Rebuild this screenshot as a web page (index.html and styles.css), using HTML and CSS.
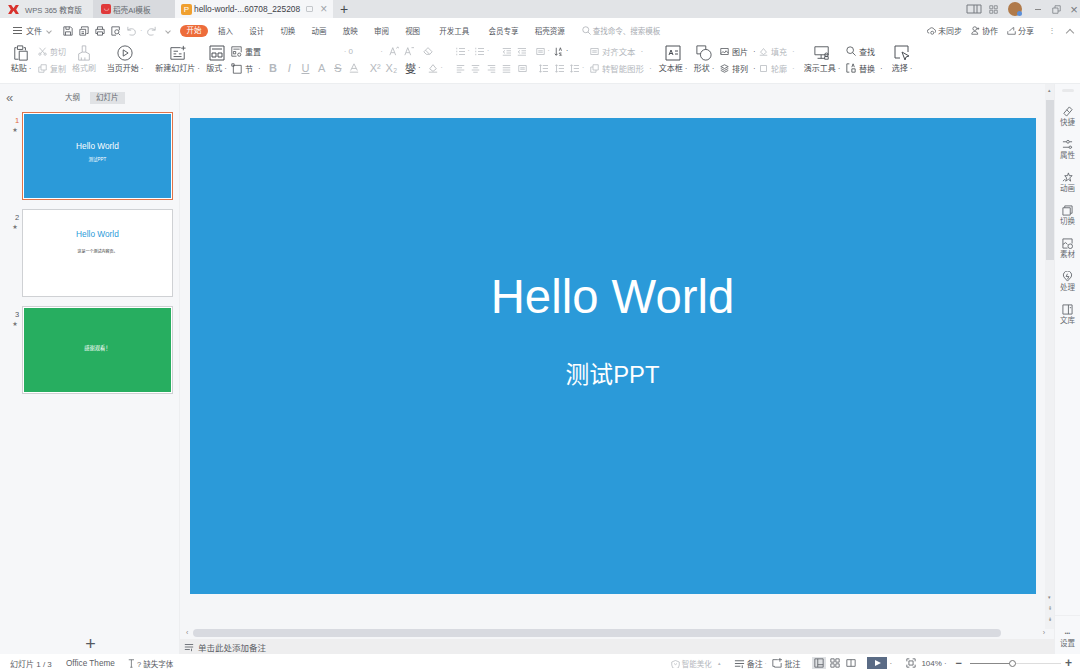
FILE: index.html
```html
<!DOCTYPE html>
<html>
<head>
  <title>hello-world - WPS</title>
  <link rel="stylesheet" href="styles.css">
</head>
<body>
  <svg class="defs" width="0" height="0">
    <defs>
      <symbol id="i-paste" viewBox="0 0 16 18"><path d="M3 3H1v13h4M11 3h2v3M4 1h6v4H4zM6 7h9v10H6z"/></symbol>
      <symbol id="i-cut" viewBox="0 0 12 12"><circle cx="2.500" cy="9.500" r="1.500"/><circle cx="9.500" cy="9.500" r="1.500"/><path d="M3.500 8.500 10 1M8.500 8.500 2 1"/></symbol>
      <symbol id="i-copy" viewBox="0 0 12 12"><path d="M4 1h7v7H4zM4 4H1v7h7V8"/></symbol>
      <symbol id="i-brush" viewBox="0 0 16 18"><path d="M6 1h4v7H6zM6 8 2 10v7h12v-7l-4-2M5 17v-3M9 17v-3"/></symbol>
      <symbol id="i-play" viewBox="0 0 18 18"><circle cx="9" cy="9" r="8"/><path d="M7 5.500 12.500 9 7 12.500z"/></symbol>
      <symbol id="i-newslide" viewBox="0 0 18 16"><path d="M12 2H1v13h15V7M15 0v5M12.500 2.500h5M4 6h5M4 9h3M4 12h9M10 9h3"/></symbol>
      <symbol id="i-layout" viewBox="0 0 16 16"><path d="M1 1h14v14H1zM3 4h10M3 8h4v4H3zM9 8h4v4H9z"/></symbol>
      <symbol id="i-reset" viewBox="0 0 14 14"><path d="M1 1h12v7M1 1v12h6M3 4h8M3 7h3v3H3z"/><circle cx="10.500" cy="11" r="2"/></symbol>
      <symbol id="i-section" viewBox="0 0 14 14"><path d="M3 3h10v10H3zM1 1h3v3H1z"/></symbol>
      <symbol id="i-grow" viewBox="0 0 12 12"><path d="M1 11 4.500 2 8 11M2.500 8h4M9 3l1.500-2L12 3"/></symbol>
      <symbol id="i-shrink" viewBox="0 0 12 12"><path d="M1 11 4.500 2 8 11M2.500 8h4M9 2h3"/></symbol>
      <symbol id="i-eraser" viewBox="0 0 12 12"><path d="M1 7l5-5 5 5-3 3H4zM3 5l5 5"/></symbol>
      <symbol id="i-a" viewBox="0 0 12 12"><path d="M2 9 6 1l4 8M3.500 6.500h5M1 11h10"/></symbol>
      <symbol id="i-list" viewBox="0 0 12 12"><path d="M4 2h8M4 6h8M4 10h8M1 1v2M1 5v2M1 9v2"/></symbol>
      <symbol id="i-indent" viewBox="0 0 12 12"><path d="M1 2h11M6 5h6M6 8h6M1 11h11M4 4.500 1.500 6.500 4 8.500"/></symbol>
      <symbol id="i-align" viewBox="0 0 12 12"><path d="M1 2h10M1 5h7M1 8h10M1 11h6"/></symbol>
      <symbol id="i-center" viewBox="0 0 12 12"><path d="M1 2h10M3 5h6M1 8h10M3 11h6"/></symbol>
      <symbol id="i-right" viewBox="0 0 12 12"><path d="M1 2h10M4 5h7M1 8h10M5 11h6"/></symbol>
      <symbol id="i-just" viewBox="0 0 12 12"><path d="M1 2h10M1 5h10M1 8h10M1 11h10"/></symbol>
      <symbol id="i-box" viewBox="0 0 12 12"><path d="M1 2h10v8H1zM3 5h6M3 7h6"/></symbol>
      <symbol id="i-sort" viewBox="0 0 12 12"><path d="M3 1v10M1 9l2 2 2-2M7 5l1.500-4L10 5M7 11h3l-3-3h3"/></symbol>
      <symbol id="i-spacing" viewBox="0 0 12 12"><path d="M2 1v10M.5 2.500 2 1l1.500 1.500M.5 9.500 2 11l1.500-1.500M5 2h7M5 6h7M5 10h7"/></symbol>
      <symbol id="i-textbox" viewBox="0 0 16 16"><path d="M1 1h14v14H1zM4 10l2-5 2 5M4.700 8.500h2.600M10 6h3M10 9h3"/></symbol>
      <symbol id="i-shape" viewBox="0 0 18 18"><path d="M1 1h10v9H1z"/><circle cx="11" cy="11" r="6" fill="#fff"/></symbol>
      <symbol id="i-picture" viewBox="0 0 12 12"><path d="M1 2h10v8H1zM1 9l3-3 2 2 2-3 3 3"/></symbol>
      <symbol id="i-fill" viewBox="0 0 12 12"><path d="M2 7l4-5 4 5-4 3zM1 11h10"/></symbol>
      <symbol id="i-stack" viewBox="0 0 12 12"><path d="M6 1l5 2.500L6 6 1 3.500zM1 6l5 2.500L11 6M1 8.500 6 11l5-2.500"/></symbol>
      <symbol id="i-square" viewBox="0 0 12 12"><path d="M2 2h8v8H2z"/></symbol>
      <symbol id="i-present" viewBox="0 0 18 16"><path d="M1 1h15v9H1zM8 10v4M4 14h8"/><circle cx="14" cy="10" r="2"/><path d="M12 15h4v-3h-4z"/></symbol>
      <symbol id="i-search" viewBox="0 0 12 12"><circle cx="5" cy="5" r="4"/><path d="M8 8l3.500 3.500"/></symbol>
      <symbol id="i-replace" viewBox="0 0 12 12"><path d="M4 1H1v10h3M7 5l1.500-4L10 5M7 7h4v4H7z"/></symbol>
      <symbol id="i-select" viewBox="0 0 16 16"><path d="M6 13H1V1h13v6M8 7l7 4-3 1-1 3z"/></symbol>
      <symbol id="i-cloud" viewBox="0 0 12 12"><path d="M3 9.500a2.500 2.500 0 0 1 0-5 3.500 3.500 0 0 1 6.500 0 2.500 2.500 0 0 1 1 4.500"/><circle cx="7" cy="9" r="2"/></symbol>
      <symbol id="i-people" viewBox="0 0 12 12"><circle cx="5" cy="3.500" r="2.500"/><path d="M1 11c0-5 8-5 8 0zM9.500 2v3M8 3.500h3"/></symbol>
      <symbol id="i-share" viewBox="0 0 12 12"><path d="M1 7v4h10V7M3 7l4-4 2-1v4"/></symbol>
      <symbol id="i-save" viewBox="0 0 12 12"><path d="M1 1h8l2 2v8H1zM3.500 1v3h4V1M3 11V7h6v4"/></symbol>
      <symbol id="i-export" viewBox="0 0 12 12"><path d="M3 3V1h8v8H9M1 4h7v7H1zM3 7h3M3 9h3"/></symbol>
      <symbol id="i-print" viewBox="0 0 12 12"><path d="M3 4V1h6v3M3 9H1V4h10v5H9M3 7h6v4H3z"/></symbol>
      <symbol id="i-preview" viewBox="0 0 12 12"><path d="M6 11H1V1h9v4"/><circle cx="7" cy="7" r="2.500"/><path d="M9 9l2 2"/></symbol>
      <symbol id="i-undo" viewBox="0 0 12 12"><path d="M1 1v4h4M1 5c3-3 9-2 9 2.500S5 11 3 10.500"/></symbol>
      <symbol id="i-redo" viewBox="0 0 12 12"><path d="M11 1v4H7M11 5C8 2 2 3 2 7.500S7 11 9 10.500"/></symbol>
      <symbol id="i-quick" viewBox="0 0 12 12"><path d="M2 8 8 1l3 3-6 7zM5 4l3 3"/></symbol>
      <symbol id="i-prop" viewBox="0 0 12 12"><path d="M1 3h4M8 3h3M1 9h7M10 9h1"/><circle cx="6.500" cy="3" r="1.500"/><circle cx="9" cy="9" r="1.300"/></symbol>
      <symbol id="i-star" viewBox="0 0 12 12"><path d="M7 1l1 3h3L8.500 6.500l1 3.500L7 8l-3 2 1-3.500L3 4h3zM1 10l2-2"/></symbol>
      <symbol id="i-trans" viewBox="0 0 12 12"><path d="M3 3V1h8v8H9M1 3h8v8H1z"/></symbol>
      <symbol id="i-material" viewBox="0 0 12 12"><path d="M6 11H1V1h10v5M1 7l3-2 2 2"/><circle cx="9" cy="9" r="2.500"/></symbol>
      <symbol id="i-process" viewBox="0 0 12 12"><path d="M6 11 2 6.500a4.500 4.500 0 1 1 8 0z"/><path d="M6 3 4.500 6h3L6 9"/></symbol>
      <symbol id="i-library" viewBox="0 0 12 12"><path d="M1 1h10v10H1zM7 1v10M8.500 4h1.500"/></symbol>
      <symbol id="i-notes" viewBox="0 0 12 12"><path d="M1 3h10M1 6h10M1 9h6M9 8v3"/></symbol>
      <symbol id="i-font" viewBox="0 0 12 12"><path d="M1 1h7M4.500 1v10M3 11h3"/></symbol>
      <symbol id="i-beauty" viewBox="0 0 12 12"><path d="M1 4l5-2 5 2v4a5 5 0 0 1-10 0zM4 6l2 1.500L8 6"/></symbol>
      <symbol id="i-comment" viewBox="0 0 12 12"><path d="M7 2H1v8h2v1h8V6M9.500 0v4.500M7.500 2H12"/></symbol>
      <symbol id="i-normal" viewBox="0 0 12 12"><path d="M1 1h10v10H1zM4.500 1v10M4.500 8H11"/></symbol>
      <symbol id="i-grid" viewBox="0 0 12 12"><path d="M1 1h4v4H1zM7 1h4v4H7zM1 7h4v4H1zM7 7h4v4H7z"/></symbol>
      <symbol id="i-book" viewBox="0 0 12 12"><path d="M1 2h10v8H1zM6 2v8"/></symbol>
      <symbol id="i-fit" viewBox="0 0 12 12"><path d="M1 4V1h3M8 1h3v3M11 8v3H8M4 11H1V8M3.500 3.500h5v5h-5z"/></symbol>
      <symbol id="i-restore" viewBox="0 0 12 12"><path d="M1 4h7v7H1zM4 4V1h7v7H8"/></symbol>
      <symbol id="i-panel" viewBox="0 0 16 10"><path d="M1 1h14v8H1zM8 1v8M11 1v8"/></symbol>
    </defs>
  </svg>

  <div class="tabbar">
    <div class="tab tab-home">
      <svg class="logo-k" viewBox="0 0 12 10"><path d="M0 0h3.500L6 3.500 8.500 0H12L9 5l3 5H8.500L6 6.500 3.500 10H0l3-5z"/></svg>
      <span>WPS 365 教育版</span>
    </div>
    <div class="tab tab-ai">
      <span class="logo-ai">◡</span>
      <span>稻壳AI模板</span>
    </div>
    <div class="tab tab-file">
      <span class="logo-p">P</span>
      <span class="tab-name">hello-world-...60708_225208</span>
      <span class="tab-bubble"></span>
      <span class="tab-x">×</span>
    </div>
    <div class="tab-add">+</div>
    <div class="tabbar-right">
      <svg class="ic ic-panel"><use href="#i-panel"/></svg>
      <svg class="ic ic-9 tb-grid"><use href="#i-grid"/></svg>
      <span class="avatar"></span>
      <span class="win-min"></span>
      <svg class="ic ic-9"><use href="#i-restore"/></svg>
      <span class="win-x">×</span>
    </div>
  </div>

  <div class="menubar">
    <span class="hamburger"><i></i><i></i><i></i></span>
    <span class="menu-file">文件</span>
    <span class="caret-down"></span>
    <div class="quick">
      <svg class="ic ic-10"><use href="#i-save"/></svg>
      <svg class="ic ic-10"><use href="#i-export"/></svg>
      <svg class="ic ic-10"><use href="#i-print"/></svg>
      <svg class="ic ic-10"><use href="#i-preview"/></svg>
      <svg class="ic ic-10 faint"><use href="#i-undo"/></svg>
      <b class="faint">·</b>
      <svg class="ic ic-10 faint"><use href="#i-redo"/></svg>
      <span class="caret-down"></span>
    </div>
    <span class="menu-active">开始</span>
    <nav class="menu-items">
      <a>插入</a><a>设计</a><a>切换</a><a>动画</a><a>放映</a><a>审阅</a><a>视图</a>
      <a class="wide">开发工具</a><a class="wide">会员专享</a><a>稻壳资源</a>
    </nav>
    <div class="menu-search">
      <svg class="ic ic-9"><use href="#i-search"/></svg>
      <span>查找命令、搜索模板</span>
    </div>
    <div class="menu-right">
      <span class="mr-item"><svg class="ic ic-9"><use href="#i-cloud"/></svg>未同步</span>
      <span class="mr-item"><svg class="ic ic-9"><use href="#i-people"/></svg>协作</span>
      <span class="mr-item"><svg class="ic ic-9"><use href="#i-share"/></svg>分享</span>
      <span class="mr-dots">⋮</span>
      <span class="mr-up"></span>
    </div>
  </div>

  <div class="ribbon">
    <div class="big w-paste"><svg class="ic ic-big"><use href="#i-paste"/></svg><span>粘贴<b>·</b></span></div>
    <div class="stack w-clip faint">
      <span class="row"><svg class="ic ic-9"><use href="#i-cut"/></svg>剪切</span>
      <span class="row"><svg class="ic ic-9"><use href="#i-copy"/></svg>复制</span>
    </div>
    <div class="big w-painter faint"><svg class="ic ic-big"><use href="#i-brush"/></svg><span>格式刷</span></div>
    <div class="big w-start"><svg class="ic ic-big"><use href="#i-play"/></svg><span>当页开始<b>·</b></span></div>
    <div class="big w-new"><svg class="ic ic-big"><use href="#i-newslide"/></svg><span>新建幻灯片<b>·</b></span></div>
    <div class="big w-layout"><svg class="ic ic-big"><use href="#i-layout"/></svg><span>版式<b>·</b></span></div>
    <div class="stack w-reset">
      <span class="row"><svg class="ic ic-11"><use href="#i-reset"/></svg>重置</span>
      <span class="row"><svg class="ic ic-11"><use href="#i-section"/></svg>节<b>·</b></span>
    </div>

    <div class="stack w-font faint">
      <span class="row font-top">
        <span class="font-input">· 0</span>
        <span class="size-caret">·</span>
        <span class="cell"><svg class="ic ic-10"><use href="#i-grow"/></svg></span>
        <span class="cell"><svg class="ic ic-10"><use href="#i-shrink"/></svg></span>
        <span class="cell cell-gap"><svg class="ic ic-10"><use href="#i-eraser"/></svg></span>
      </span>
      <span class="row font-btm">
        <span class="cell bold">B</span>
        <span class="cell ital">I</span>
        <span class="cell under">U</span>
        <span class="cell">A</span>
        <span class="cell strike">S</span>
        <span class="cell"><svg class="ic ic-10"><use href="#i-a"/></svg></span>
        <span class="cell cell-x">X²</span>
        <span class="cell">X₂</span>
        <span class="cell cell-gap dark caret">燮</span>
        <span class="cell cell-pen caret"><svg class="ic ic-10"><use href="#i-fill"/></svg></span>
      </span>
    </div>

    <div class="stack w-para faint">
      <span class="row">
        <span class="cell caret"><svg class="ic ic-9"><use href="#i-list"/></svg></span>
        <span class="cell cell-wide caret"><svg class="ic ic-9"><use href="#i-list"/></svg></span>
        <span class="cell cell-wider"><svg class="ic ic-9"><use href="#i-indent"/></svg></span>
        <span class="cell"><svg class="ic ic-9"><use href="#i-indent"/></svg></span>
        <span class="cell cell-gap caret"><svg class="ic ic-9"><use href="#i-box"/></svg></span>
        <span class="cell cell-gap caret dark"><svg class="ic ic-9"><use href="#i-sort"/></svg></span>
      </span>
      <span class="row">
        <span class="cell"><svg class="ic ic-9"><use href="#i-align"/></svg></span>
        <span class="cell"><svg class="ic ic-9"><use href="#i-center"/></svg></span>
        <span class="cell"><svg class="ic ic-9"><use href="#i-right"/></svg></span>
        <span class="cell"><svg class="ic ic-9"><use href="#i-just"/></svg></span>
        <span class="cell"><svg class="ic ic-9"><use href="#i-box"/></svg></span>
        <span class="cell cell-sep"><svg class="ic ic-9"><use href="#i-spacing"/></svg></span>
        <span class="cell"><svg class="ic ic-9"><use href="#i-spacing"/></svg></span>
        <span class="cell caret"><svg class="ic ic-9"><use href="#i-spacing"/></svg></span>
      </span>
    </div>
    <div class="stack w-text faint">
      <span class="row"><svg class="ic ic-9"><use href="#i-box"/></svg>对齐文本<b>·</b></span>
      <span class="row"><svg class="ic ic-9"><use href="#i-copy"/></svg>转智能图形<b>·</b></span>
    </div>

    <div class="big w-textbox"><svg class="ic ic-big"><use href="#i-textbox"/></svg><span>文本框<b>·</b></span></div>
    <div class="big w-shape"><svg class="ic ic-big"><use href="#i-shape"/></svg><span>形状<b>·</b></span></div>
    <div class="stack w-pic">
      <span class="row"><svg class="ic ic-9"><use href="#i-picture"/></svg>图片<b>·</b></span>
      <span class="row"><svg class="ic ic-9"><use href="#i-stack"/></svg>排列<b>·</b></span>
    </div>
    <div class="stack w-fill faint">
      <span class="row"><svg class="ic ic-9"><use href="#i-fill"/></svg>填充<b>·</b></span>
      <span class="row"><svg class="ic ic-9"><use href="#i-square"/></svg>轮廓<b>·</b></span>
    </div>
    <div class="big w-present"><svg class="ic ic-big"><use href="#i-present"/></svg><span>演示工具<b>·</b></span></div>
    <div class="stack w-find">
      <span class="row"><svg class="ic ic-10"><use href="#i-search"/></svg>查找</span>
      <span class="row"><svg class="ic ic-10"><use href="#i-replace"/></svg>替换<b>·</b></span>
    </div>
    <div class="big w-select"><svg class="ic ic-big"><use href="#i-select"/></svg><span>选择<b>·</b></span></div>
  </div>

  <div class="workspace">
    <aside class="slides-pane">
      <div class="pane-tabs">
        <span class="collapse">«</span>
        <span class="pane-tab">大纲</span>
        <span class="pane-tab current">幻灯片</span>
      </div>
      <div class="thumb-list">
        <div class="thumb-row">
          <div class="thumb-no active-no">1<i>★</i></div>
          <div class="thumb selected"><div class="mini blue">
            <div class="mini-title">Hello World</div>
            <div class="mini-sub">测试PPT</div>
          </div></div>
        </div>
        <div class="thumb-row">
          <div class="thumb-no">2<i>★</i></div>
          <div class="thumb"><div class="mini white">
            <div class="mini-title">Hello World</div>
            <div class="mini-sub">这是一个测试内容页。</div>
          </div></div>
        </div>
        <div class="thumb-row">
          <div class="thumb-no">3<i>★</i></div>
          <div class="thumb"><div class="mini green">
            <div class="mini-thanks">感谢观看！</div>
          </div></div>
        </div>
      </div>
      <div class="add-slide">+</div>
    </aside>

    <main class="editor">
      <div class="editor-top">
        <div class="stage">
          <div class="slide">
            <div class="slide-title">Hello World</div>
            <div class="slide-sub">测试PPT</div>
          </div>
        </div>
        <div class="vscroll">
          <span class="arrow">▴</span>
          <span class="vthumb"></span>
          <span class="arrow low">▾</span>
          <span class="arrow">⇞</span>
          <span class="arrow">⇟</span>
        </div>
      </div>
      <div class="hscroll">
        <span class="arrow">‹</span>
        <span class="hthumb"></span>
        <span class="arrow">›</span>
      </div>
      <div class="notes">
        <svg class="ic ic-10"><use href="#i-notes"/></svg>
        <span>单击此处添加备注</span>
      </div>
    </main>

    <aside class="sidetools">
      <div class="side-grip"></div>
      <div class="tool"><svg class="ic ic-11"><use href="#i-quick"/></svg>快捷</div>
      <div class="tool"><svg class="ic ic-11"><use href="#i-prop"/></svg>属性</div>
      <div class="tool"><svg class="ic ic-11"><use href="#i-star"/></svg>动画</div>
      <div class="tool"><svg class="ic ic-11"><use href="#i-trans"/></svg>切换</div>
      <div class="tool"><svg class="ic ic-11"><use href="#i-material"/></svg>素材</div>
      <div class="tool"><svg class="ic ic-11"><use href="#i-process"/></svg>处理</div>
      <div class="tool"><svg class="ic ic-11"><use href="#i-library"/></svg>文库</div>
      <div class="tool settings"><span class="dots">•••</span>设置</div>
    </aside>
  </div>

  <div class="statusbar">
    <span class="st-page">幻灯片 1 / 3</span>
    <span class="st-theme">Office Theme</span>
    <span class="st-font"><svg class="ic ic-9"><use href="#i-font"/></svg>? 缺失字体</span>
    <div class="st-right">
      <span class="st-item st-beauty faint"><svg class="ic ic-9"><use href="#i-beauty"/></svg>智能美化 <b>▴</b></span>
      <span class="st-item"><svg class="ic ic-11"><use href="#i-notes"/></svg>备注<b>·</b></span>
      <span class="st-item st-comment"><svg class="ic ic-10"><use href="#i-comment"/></svg>批注</span>
      <span class="view-btn on"><svg class="ic ic-10"><use href="#i-normal"/></svg></span>
      <span class="view-btn"><svg class="ic ic-10"><use href="#i-grid"/></svg></span>
      <span class="view-btn"><svg class="ic ic-10"><use href="#i-book"/></svg></span>
      <span class="play-btn"></span>
      <b class="play-caret">·</b>
      <svg class="ic ic-10 st-fit"><use href="#i-fit"/></svg>
      <span class="st-zoom">104%<b>·</b></span>
      <span class="z-minus">−</span>
      <span class="z-track"><i></i></span>
      <span class="z-plus">+</span>
    </div>
  </div>
</body>
</html>
```

FILE: styles.css
```css
/* Global styles */
* {
  box-sizing: border-box;
}

html, body {
  height: 100%;
}

body {
  margin: 0;
  width: 1080px;
  height: 669px;
  overflow: hidden;
  display: flex;
  flex-direction: column;
  font-family: "Liberation Sans", "Noto Sans CJK SC", sans-serif;
  font-size: 8px;
  color: #50545a;
  background-color: #f5f6f8;
}

.defs {
  position: absolute;
}

/* Icons */
.ic {
  flex: none;
  fill: none;
  stroke: currentColor;
  stroke-width: 1;
}

.ic-9 { width: 9px; height: 9px; }
.ic-10 { width: 10px; height: 10px; }
.ic-11 { width: 11px; height: 11px; }
.ic-big { width: 16px; height: 16px; margin-top: 2px; }
.ic-panel { width: 16px; height: 10px; }

.faint {
  color: #b4b8bd;
}

.dark {
  color: #44484e;
}

/* Tab bar */
.tabbar {
  flex: none;
  height: 18px;
  display: flex;
  background-color: #e2e4e7;
}

.tab {
  display: flex;
  align-items: center;
  height: 18px;
  color: #666a70;
  font-size: 7.600px;
}

.tab-home {
  width: 93px;
  padding-left: 8px;
  gap: 6px;
  background-color: #e7e9eb;
}

.logo-k {
  width: 11px;
  height: 9px;
  fill: #d8322c;
}

.tab-ai {
  width: 82px;
  padding-left: 8px;
  gap: 2px;
  background-color: #d8dade;
}

.logo-ai {
  width: 10px;
  height: 10px;
  border-radius: 2px;
  background-color: #e0393a;
  color: #fff;
  font-size: 6px;
  line-height: 9px;
  text-align: center;
}

.tab-file {
  width: 158px;
  padding-left: 6px;
  background-color: #f5f6f8;
  color: #3c4046;
}

.logo-p {
  width: 11px;
  height: 11px;
  margin-right: 2px;
  border-radius: 2px;
  background-color: #f0a030;
  color: #fff;
  font-size: 8px;
  line-height: 11px;
  text-align: center;
}

.tab-name {
  font-size: 8.400px;
  white-space: nowrap;
}

.tab-bubble {
  width: 7px;
  height: 6px;
  margin-left: 6px;
  border: 1px solid #c4c7cb;
  border-radius: 1px;
}

.tab-x {
  margin-left: 7px;
  font-size: 12px;
  color: #a0a4a9;
}

.tab-add {
  width: 22px;
  text-align: center;
  font-size: 14px;
  line-height: 18px;
  color: #44484e;
}

.tabbar-right {
  margin-left: auto;
  display: flex;
  align-items: center;
  color: #777b80;
}

.tb-grid {
  margin-left: 7px;
}

.avatar {
  position: relative;
  width: 14px;
  height: 14px;
  margin-left: 10px;
  border-radius: 50%;
  background-color: #b07a4a;
}

.avatar::after {
  content: "";
  position: absolute;
  right: 0;
  bottom: 0;
  width: 5px;
  height: 5px;
  border-radius: 50%;
  background-color: #5b8fd8;
}

.win-min {
  width: 6px;
  height: 1px;
  margin-left: 13px;
  margin-right: 11px;
  background-color: #888;
}

.win-x {
  width: 12px;
  margin-left: 7px;
  font-size: 13px;
  text-align: center;
}

/* Menu row */
.menubar {
  flex: none;
  height: 25px;
  display: flex;
  align-items: center;
  padding-left: 13px;
  background-color: #fff;
  font-size: 7.500px;
  color: #55595f;
}

.hamburger {
  width: 9px;
  display: flex;
  flex-direction: column;
  gap: 2px;
  margin-right: 4px;
}

.hamburger i {
  display: block;
  height: 1px;
  background-color: #666;
}

.menu-file {
  font-size: 8px;
}

.caret-down {
  width: 4px;
  height: 4px;
  margin-left: 5px;
  border-right: 1px solid #aaa;
  border-bottom: 1px solid #aaa;
  transform: rotate(45deg);
}

.quick {
  display: flex;
  align-items: center;
  gap: 6px;
  margin-left: 12px;
  width: 117px;
  color: #55595f;
}

.quick b {
  font-weight: normal;
  width: 2px;
  margin-left: -3px;
  margin-right: -2px;
}

.quick .caret-down {
  margin-left: 4px;
}

.menu-active {
  width: 28px;
  height: 12px;
  border-radius: 6px;
  background-color: #ed6c3a;
  color: #fff;
  line-height: 12px;
  text-align: center;
}

.menu-items {
  display: flex;
  gap: 16.200px;
  margin-left: 10px;
}

.menu-items a.wide {
  margin-left: 3px;
}

.menu-search {
  display: flex;
  align-items: center;
  gap: 2px;
  margin-left: 17px;
  color: #a8acb2;
}

.menu-right {
  margin-left: auto;
  display: flex;
  align-items: center;
  gap: 9px;
  padding-right: 7px;
  font-size: 8px;
}

.mr-item {
  display: flex;
  align-items: center;
  gap: 2px;
}

.mr-dots {
  margin-left: 5px;
  margin-right: 2px;
  color: #999;
}

.mr-up {
  width: 6px;
  height: 6px;
  margin-top: 4px;
  border-left: 1px solid #999;
  border-top: 1px solid #999;
  transform: rotate(45deg);
}

/* Ribbon */
.ribbon {
  flex: none;
  height: 41px;
  display: flex;
  background-color: #fff;
  border-bottom: 1px solid #eceef0;
  font-size: 8px;
  color: #4c5056;
  white-space: nowrap;
}

.ribbon b {
  font-weight: normal;
  margin-left: 2px;
}

.big {
  display: flex;
  flex-direction: column;
  align-items: center;
  justify-content: space-between;
  height: 32px;
}

.big span {
  line-height: 12px;
}

.stack {
  display: flex;
  flex-direction: column;
  justify-content: space-between;
  height: 31px;
  padding-top: 2px;
}

.row {
  display: flex;
  align-items: center;
  gap: 3px;
  height: 12px;
}

.w-paste { width: 24px; margin-left: 9px; }
.w-clip { width: 31px; margin-left: 5px; }
.w-painter { width: 26px; margin-left: 2px; }
.w-start { width: 40px; margin-left: 8px; }
.w-new { width: 47px; margin-left: 9px; }
.w-layout { width: 25px; margin-left: 3px; }
.w-reset { width: 36px; margin-left: 2px; }
.w-font { width: 189px; margin-left: -2px; }
.w-para { width: 141.500px; margin-left: -1.500px; }
.w-text { width: 66px; margin-left: -4px; font-size: 8.400px; }
.w-textbox { width: 34px; }
.w-shape { width: 28px; }
.w-pic { width: 38px; margin-left: 2px; }
.w-fill { width: 40px; margin-left: 1px; }
.w-present { width: 36px; margin-left: 5px; }
.w-find { width: 40px; margin-left: 6px; }
.w-select { width: 28px; margin-left: 2px; }

/* Fixed width buttons in the font and paragraph groups */
.cell {
  position: relative;
  flex: none;
  display: flex;
  align-items: center;
  justify-content: center;
  width: 15.500px;
  height: 12px;
}

.cell.caret::after {
  content: "·";
  position: absolute;
  right: -2px;
  top: 1px;
  font-size: 8px;
}

.cell-gap { margin-left: 3px; }
.cell-wide { margin-left: 4px; }
.cell-wider { margin-left: 11px; }
.cell-sep { margin-left: 6px; }
.cell-x { margin-left: 5px; }
.cell-pen { margin-left: 6px; }

.w-font .row,
.w-para .row {
  gap: 0;
}

.w-font .font-top {
  padding-left: 6px;
}

.font-input {
  width: 82px;
  text-align: right;
}

.size-caret {
  width: 30px;
  margin-right: 3px;
  text-align: right;
}

.font-btm {
  font-size: 11px;
}

.font-btm .cell {
  width: 16.200px;
}

.bold { font-weight: bold; }
.ital { font-style: italic; }
.under { text-decoration: underline; }
.strike { text-decoration: line-through; }

/* Workspace */
.workspace {
  flex: 1;
  min-height: 0;
  display: flex;
}

.slides-pane {
  flex: none;
  width: 180px;
  display: flex;
  flex-direction: column;
  padding: 8px 6px 3px 6px;
  background-color: #f6f7f9;
  border-right: 1px solid #edeef0;
}

.pane-tabs {
  display: flex;
  align-items: center;
  height: 12px;
  color: #666a70;
  font-size: 7.500px;
}

.collapse {
  width: 53px;
  font-size: 13px;
  line-height: 12px;
  color: #777;
}

.pane-tab {
  padding: 0 6px;
  line-height: 12px;
}

.pane-tab.current {
  margin-left: 4px;
  background-color: #e0e2e5;
}

.thumb-list {
  display: flex;
  flex-direction: column;
  gap: 9px;
  margin-top: 8px;
}

.thumb-row {
  display: flex;
}

.thumb-no {
  width: 16px;
  padding: 5px 0 0 6px;
  font-size: 7.500px;
  line-height: 8px;
  text-align: center;
  color: #55595f;
}

.thumb-no i {
  display: block;
  margin-left: -4px;
  font-size: 5px;
  font-style: normal;
  color: #777;
}

.active-no {
  color: #e0673a;
}

.thumb {
  width: 152px;
  height: 88px;
  padding: 1px;
  border: 1.500px solid #cfd1d4;
  background-color: #fff;
}

.thumb.selected {
  border-color: #e0744a;
}

.mini {
  height: 100%;
  display: flex;
  flex-direction: column;
  align-items: center;
  padding-top: 27px;
}

.mini.blue {
  background-color: #2b9ad9;
  color: #fff;
}

.mini.white {
  padding-top: 18px;
  background-color: #fff;
  color: #2b9ad9;
}

.mini.green {
  background-color: #27ae60;
  color: #fff;
  padding-top: 36px;
}

.mini-title {
  font-size: 8.300px;
  line-height: 10px;
}

.mini-sub {
  margin-top: 6px;
  font-size: 4.500px;
  line-height: 6px;
}

.mini.white .mini-sub {
  margin-top: 10px;
  font-size: 4px;
  color: #333;
}

.mini-thanks {
  font-size: 5.300px;
  line-height: 8px;
}

.add-slide {
  margin-top: auto;
  padding-left: 2px;
  text-align: center;
  font-size: 18px;
  font-weight: 300;
  line-height: 14px;
  color: #55595f;
}

/* Editor */
.editor {
  flex: 1;
  min-width: 0;
  display: flex;
  flex-direction: column;
  background-color: #f5f6f8;
}

.editor-top {
  flex: 1;
  min-height: 0;
  display: flex;
}

.stage {
  flex: 1;
  padding: 34px 9px 0 10px;
}

.slide {
  width: 846px;
  height: 476px;
  padding: 152px 1px 0 0;
  background-color: #2b9ad9;
  color: #fff;
  text-align: center;
}

.slide-title {
  font-size: 47.300px;
  line-height: 54px;
}

.slide-sub {
  margin-top: 37px;
  font-size: 23.800px;
  line-height: 28px;
}

.vscroll {
  flex: none;
  width: 9px;
  display: flex;
  flex-direction: column;
  align-items: center;
  padding: 1px 0 4px;
  background-color: #f0f1f3;
}

.vscroll .arrow {
  font-size: 5px;
  line-height: 11px;
  color: #888;
}

.vthumb {
  width: 8px;
  height: 160px;
  margin-top: 4px;
  background-color: #d8dade;
}

.vscroll .low {
  margin-top: auto;
}

.hscroll {
  flex: none;
  height: 10px;
  display: flex;
  padding: 0 9px 0 6px;
  gap: 5px;
}

.hscroll .arrow {
  font-size: 7px;
  line-height: 8px;
  color: #888;
}

.hthumb {
  width: 808px;
  height: 8px;
  border-radius: 4px;
  background-color: #d8dae0;
}

.hscroll .arrow:last-child {
  margin-left: auto;
}

.notes {
  flex: none;
  height: 15px;
  display: flex;
  align-items: center;
  gap: 4px;
  padding-left: 4px;
  background-color: #eeeeef;
  color: #5c6066;
  font-size: 8.500px;
}

/* Right tools */
.sidetools {
  flex: none;
  width: 26px;
  display: flex;
  flex-direction: column;
  align-items: center;
  padding-top: 5px;
  background-color: #f7f8fa;
  border-left: 1px solid #edeef0;
  font-size: 7.500px;
  color: #666a70;
}

.side-grip {
  width: 12px;
  height: 3px;
  margin-bottom: 14px;
  border-radius: 2px;
  background-color: #e8e9eb;
}

.tool {
  display: flex;
  flex-direction: column;
  align-items: center;
  gap: 1px;
  height: 33px;
  line-height: 10px;
}

.tool.settings {
  width: 100%;
  height: 39px;
  margin-top: auto;
  padding-top: 13px;
  border-top: 1px solid #eeeff1;
}

.dots {
  font-size: 5px;
  line-height: 9px;
}

/* Status bar */
.statusbar {
  flex: none;
  height: 15px;
  display: flex;
  align-items: center;
  padding: 3px 0 0 10px;
  background-color: #fff;
  font-size: 8px;
  color: #5c6066;
}

.st-page {
  width: 56px;
}

.st-theme {
  width: 62px;
  font-size: 8.200px;
}

.st-font {
  display: flex;
  align-items: center;
  font-size: 7.500px;
}

.st-right {
  margin-left: auto;
  display: flex;
  align-items: center;
  padding-right: 8px;
}

.st-item {
  display: flex;
  align-items: center;
  gap: 2px;
  margin-right: 6px;
}

.st-item b {
  font-size: 5px;
  font-weight: normal;
}

.st-beauty {
  margin-right: 13px;
  font-size: 7.500px;
}

.st-beauty b {
  margin-left: 4px;
}

.st-comment {
  margin-right: 12px;
}

.view-btn {
  display: flex;
  align-items: center;
  justify-content: center;
  width: 14px;
  height: 12px;
  margin-right: 2px;
}

.view-btn.on {
  background-color: #dfe1e4;
}

.play-btn {
  position: relative;
  width: 20px;
  height: 12px;
  margin-left: 7px;
  background-color: #5a6b85;
}

.play-btn::after {
  content: "";
  position: absolute;
  left: 8px;
  top: 3px;
  border-left: 6px solid #fff;
  border-top: 3px solid transparent;
  border-bottom: 3px solid transparent;
}

.play-caret {
  width: 10px;
  margin-left: 2px;
  font-weight: normal;
}

.st-fit {
  margin-left: 7px;
}

.st-zoom {
  margin-left: 5px;
}

.st-zoom b {
  margin-left: 2px;
  font-weight: normal;
}

.z-minus {
  margin-left: 9px;
  font-size: 11px;
  font-weight: bold;
}

.z-track {
  position: relative;
  width: 91px;
  height: 1px;
  margin-left: 8px;
  background: linear-gradient(to right, #888 0 43px, #ddd 43px);
}

.z-track i {
  position: absolute;
  left: 39px;
  top: -3px;
  width: 7px;
  height: 7px;
  border: 1px solid #777;
  border-radius: 50%;
  background-color: #fff;
}

.z-plus {
  margin-left: 4px;
  font-size: 12px;
  font-weight: bold;
}
```
